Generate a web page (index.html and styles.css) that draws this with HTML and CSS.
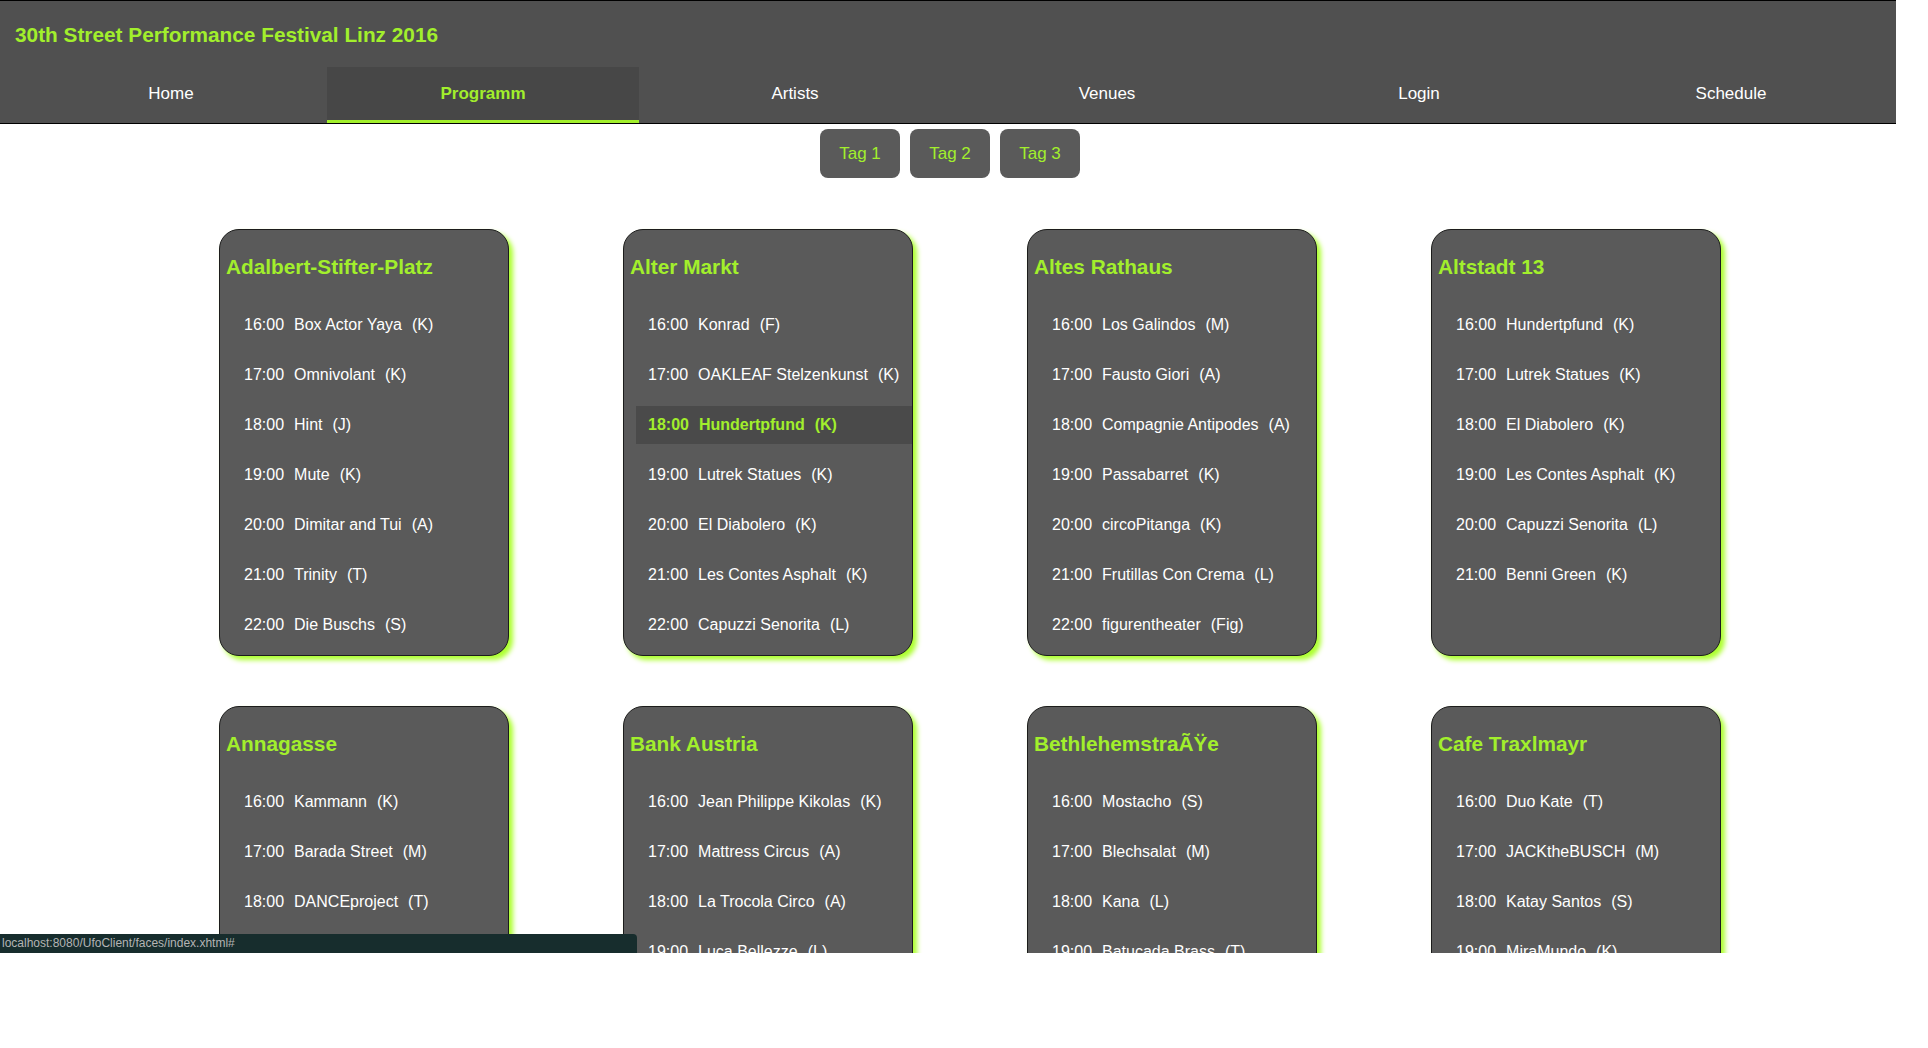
FILE: index.html
```html
<!DOCTYPE html>
<html lang="de">
<head>
<meta charset="utf-8">
<title>30th Street Performance Festival Linz 2016</title>
<link rel="stylesheet" href="styles.css">
</head>
<body>
<div class="viewport">
  <header class="header">
    <h1 class="site-title">30th Street Performance Festival Linz 2016</h1>
    <nav class="nav">
      <a class="tab" href="#">Home</a>
      <a class="tab active" href="#">Programm</a>
      <a class="tab" href="#">Artists</a>
      <a class="tab" href="#">Venues</a>
      <a class="tab" href="#">Login</a>
      <a class="tab" href="#">Schedule</a>
    </nav>
  </header>

  <div class="days">
    <button class="day">Tag 1</button>
    <button class="day">Tag 2</button>
    <button class="day">Tag 3</button>
  </div>

  <main class="venues">
    <section class="venue">
      <h2 class="venue-name">Adalbert-Stifter-Platz</h2>
      <ul class="shows">
        <li class="show"><span>16:00</span><span class="gap">Box Actor Yaya</span><span class="gap">(K)</span></li>
        <li class="show"><span>17:00</span><span class="gap">Omnivolant</span><span class="gap">(K)</span></li>
        <li class="show"><span>18:00</span><span class="gap">Hint</span><span class="gap">(J)</span></li>
        <li class="show"><span>19:00</span><span class="gap">Mute</span><span class="gap">(K)</span></li>
        <li class="show"><span>20:00</span><span class="gap">Dimitar and Tui</span><span class="gap">(A)</span></li>
        <li class="show"><span>21:00</span><span class="gap">Trinity</span><span class="gap">(T)</span></li>
        <li class="show"><span>22:00</span><span class="gap">Die Buschs</span><span class="gap">(S)</span></li>
      </ul>
    </section>

    <section class="venue">
      <h2 class="venue-name">Alter Markt</h2>
      <ul class="shows">
        <li class="show"><span>16:00</span><span class="gap">Konrad</span><span class="gap">(F)</span></li>
        <li class="show"><span>17:00</span><span class="gap">OAKLEAF Stelzenkunst</span><span class="gap">(K)</span></li>
        <li class="show current"><span>18:00</span><span class="gap">Hundertpfund</span><span class="gap">(K)</span></li>
        <li class="show"><span>19:00</span><span class="gap">Lutrek Statues</span><span class="gap">(K)</span></li>
        <li class="show"><span>20:00</span><span class="gap">El Diabolero</span><span class="gap">(K)</span></li>
        <li class="show"><span>21:00</span><span class="gap">Les Contes Asphalt</span><span class="gap">(K)</span></li>
        <li class="show"><span>22:00</span><span class="gap">Capuzzi Senorita</span><span class="gap">(L)</span></li>
      </ul>
    </section>

    <section class="venue">
      <h2 class="venue-name">Altes Rathaus</h2>
      <ul class="shows">
        <li class="show"><span>16:00</span><span class="gap">Los Galindos</span><span class="gap">(M)</span></li>
        <li class="show"><span>17:00</span><span class="gap">Fausto Giori</span><span class="gap">(A)</span></li>
        <li class="show"><span>18:00</span><span class="gap">Compagnie Antipodes</span><span class="gap">(A)</span></li>
        <li class="show"><span>19:00</span><span class="gap">Passabarret</span><span class="gap">(K)</span></li>
        <li class="show"><span>20:00</span><span class="gap">circoPitanga</span><span class="gap">(K)</span></li>
        <li class="show"><span>21:00</span><span class="gap">Frutillas Con Crema</span><span class="gap">(L)</span></li>
        <li class="show"><span>22:00</span><span class="gap">figurentheater</span><span class="gap">(Fig)</span></li>
      </ul>
    </section>

    <section class="venue">
      <h2 class="venue-name">Altstadt 13</h2>
      <ul class="shows">
        <li class="show"><span>16:00</span><span class="gap">Hundertpfund</span><span class="gap">(K)</span></li>
        <li class="show"><span>17:00</span><span class="gap">Lutrek Statues</span><span class="gap">(K)</span></li>
        <li class="show"><span>18:00</span><span class="gap">El Diabolero</span><span class="gap">(K)</span></li>
        <li class="show"><span>19:00</span><span class="gap">Les Contes Asphalt</span><span class="gap">(K)</span></li>
        <li class="show"><span>20:00</span><span class="gap">Capuzzi Senorita</span><span class="gap">(L)</span></li>
        <li class="show"><span>21:00</span><span class="gap">Benni Green</span><span class="gap">(K)</span></li>
      </ul>
    </section>

    <section class="venue">
      <h2 class="venue-name">Annagasse</h2>
      <ul class="shows">
        <li class="show"><span>16:00</span><span class="gap">Kammann</span><span class="gap">(K)</span></li>
        <li class="show"><span>17:00</span><span class="gap">Barada Street</span><span class="gap">(M)</span></li>
        <li class="show"><span>18:00</span><span class="gap">DANCEproject</span><span class="gap">(T)</span></li>
        <li class="show"><span>19:00</span><span class="gap">Omnivolant</span><span class="gap">(K)</span></li>
      </ul>
    </section>

    <section class="venue">
      <h2 class="venue-name">Bank Austria</h2>
      <ul class="shows">
        <li class="show"><span>16:00</span><span class="gap">Jean Philippe Kikolas</span><span class="gap">(K)</span></li>
        <li class="show"><span>17:00</span><span class="gap">Mattress Circus</span><span class="gap">(A)</span></li>
        <li class="show"><span>18:00</span><span class="gap">La Trocola Circo</span><span class="gap">(A)</span></li>
        <li class="show"><span>19:00</span><span class="gap">Luca Bellezze</span><span class="gap">(L)</span></li>
      </ul>
    </section>

    <section class="venue">
      <h2 class="venue-name">Bethlehemstra&Atilde;&Yuml;e</h2>
      <ul class="shows">
        <li class="show"><span>16:00</span><span class="gap">Mostacho</span><span class="gap">(S)</span></li>
        <li class="show"><span>17:00</span><span class="gap">Blechsalat</span><span class="gap">(M)</span></li>
        <li class="show"><span>18:00</span><span class="gap">Kana</span><span class="gap">(L)</span></li>
        <li class="show"><span>19:00</span><span class="gap">Batucada Brass</span><span class="gap">(T)</span></li>
      </ul>
    </section>

    <section class="venue">
      <h2 class="venue-name">Cafe Traxlmayr</h2>
      <ul class="shows">
        <li class="show"><span>16:00</span><span class="gap">Duo Kate</span><span class="gap">(T)</span></li>
        <li class="show"><span>17:00</span><span class="gap">JACKtheBUSCH</span><span class="gap">(M)</span></li>
        <li class="show"><span>18:00</span><span class="gap">Katay Santos</span><span class="gap">(S)</span></li>
        <li class="show"><span>19:00</span><span class="gap">MiraMundo</span><span class="gap">(K)</span></li>
      </ul>
    </section>
  </main>

  <div class="statusbar">localhost:8080/UfoClient/faces/index.xhtml#</div>
</div>
</body>
</html>
```

FILE: styles.css
```css
* {
  box-sizing: border-box;
}

html, body {
  margin: 0;
  padding: 0;
  background: #ffffff;
}

body {
  font-family: "Liberation Sans", Arial, sans-serif;
  color: #ffffff;
}

.viewport {
  position: relative;
  width: 1896px;
  height: 953px;
  overflow: hidden;
  background: #ffffff;
}

/* Header */
.header {
  background: #505050;
  border-top: 1px solid #000000;
  border-bottom: 1px solid #000000;
}

.site-title {
  margin: 0;
  height: 66px;
  padding: 21px 0 0 15px;
  font-size: 20.8px;
  line-height: 25px;
  font-weight: bold;
  color: #a2ef2c;
}

.nav {
  display: flex;
  height: 56px;
  padding: 0 9px 0 15px;
}

.tab {
  flex: 0 0 312px;
  height: 56px;
  line-height: 53px;
  text-align: center;
  font-size: 17px;
  color: #ffffff;
  text-decoration: none;
  border-bottom: 3px solid transparent;
}

.tab.active {
  background: #474747;
  color: #a2ef2c;
  font-weight: bold;
  border-bottom-color: #a2ef2c;
}

/* Day buttons */
.days {
  display: flex;
  justify-content: center;
  gap: 10px;
  margin-top: 5px;
  padding-left: 4px;
}

.day {
  width: 80px;
  height: 49px;
  border: none;
  border-radius: 8px;
  background: #5a5a5a;
  color: #a2ef2c;
  font-family: "Liberation Sans", Arial, sans-serif;
  font-size: 17px;
  padding: 0;
}

/* Venues */
.venues {
  display: grid;
  grid-template-columns: repeat(4, 290px);
  column-gap: 114px;
  row-gap: 50px;
  margin-top: 51px;
  padding-left: 219px;
}

.venue {
  height: 427px;
  background: #5a5a5a;
  border: 1px solid #1c1c1c;
  border-radius: 20px;
  box-shadow: 4px 4px 5px #adff2f;
  padding: 25px 0 0 6px;
}

.venue-name {
  margin: 0 0 27px 0;
  font-size: 20.8px;
  line-height: 24px;
  font-weight: bold;
  color: #a2ef2c;
  white-space: nowrap;
}

.shows {
  list-style: none;
  margin: 0 0 0 6px;
  padding: 0;
}

.show {
  height: 38px;
  line-height: 38px;
  margin-bottom: 12px;
  padding-left: 12px;
  font-size: 16px;
  color: #ffffff;
  white-space: nowrap;
}

.show .gap {
  margin-left: 10px;
}

.show.current {
  background: #4a4a4a;
  color: #a2ef2c;
  font-weight: bold;
}

/* Browser status bar */
.statusbar {
  position: absolute;
  left: 0;
  bottom: 0;
  width: 637px;
  height: 19px;
  padding-left: 2px;
  background: #172d2d;
  border-top-right-radius: 4px;
  color: #b4b4b4;
  font-size: 12px;
  line-height: 19px;
}
```
